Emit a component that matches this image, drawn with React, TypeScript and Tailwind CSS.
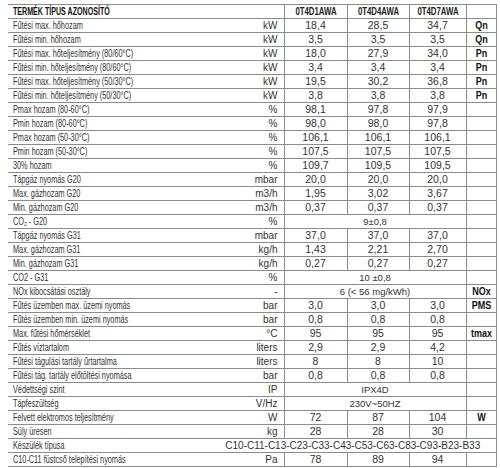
type Row = {
  label: string;
  unit?: string;
  values?: string[];
  span?: string;
  full?: string;
  sym?: string;
};

const rows: Row[] = [
  { label: "Fűtési max. hőhozam", unit: "kW", values: ["18,4", "28,5", "34,7"], sym: "Qn" },
  { label: "Fűtési min. hőhozam", unit: "kW", values: ["3,5", "3,5", "3,5"], sym: "Qn" },
  { label: "Fűtési max. hőteljesítmény (80/60°C)", unit: "kW", values: ["18,0", "27,9", "34,0"], sym: "Pn" },
  { label: "Fűtési min. hőteljesítmény (80/60°C)", unit: "kW", values: ["3,4", "3,4", "3,4"], sym: "Pn" },
  { label: "Fűtési max. hőteljesítmény (50/30°C)", unit: "kW", values: ["19,5", "30,2", "36,8"], sym: "Pn" },
  { label: "Fűtési min. hőteljesítmény (50/30°C)", unit: "kW", values: ["3,8", "3,8", "3,8"], sym: "Pn" },
  { label: "Pmax hozam (80-60°C)", unit: "%", values: ["98,1", "97,8", "97,9"] },
  { label: "Pmin hozam (80-60°C)", unit: "%", values: ["98,0", "98,0", "97,8"] },
  { label: "Pmax hozam (50-30°C)", unit: "%", values: ["106,1", "106,1", "106,1"] },
  { label: "Pmin hozam (50-30°C)", unit: "%", values: ["107,5", "107,5", "107,5"] },
  { label: "30% hozam", unit: "%", values: ["109,7", "109,5", "109,5"] },
  { label: "Tápgáz nyomás G20", unit: "mbar", values: ["20,0", "20,0", "20,0"] },
  { label: "Max. gázhozam G20", unit: "m3/h", values: ["1,95", "3,02", "3,67"] },
  { label: "Min. gázhozam G20", unit: "m3/h", values: ["0,37", "0,37", "0,37"] },
  { label: "CO₂ - G20", unit: "%", span: "9±0,8" },
  { label: "Tápgáz nyomás G31", unit: "mbar", values: ["37,0", "37,0", "37,0"] },
  { label: "Max. gázhozam G31", unit: "kg/h", values: ["1,43", "2,21", "2,70"] },
  { label: "Min. gázhozam G31", unit: "kg/h", values: ["0,27", "0,27", "0,27"] },
  { label: "CO2 - G31", unit: "%", span: "10 ±0,8" },
  { label: "NOx kibocsátási osztály", unit: "-", span: "6 (< 56 mg/kWh)", sym: "NOx" },
  { label: "Fűtés üzemben max. üzemi nyomás", unit: "bar", values: ["3,0", "3,0", "3,0"], sym: "PMS" },
  { label: "Fűtés üzemben min. üzemi nyomás", unit: "bar", values: ["0,8", "0,8", "0,8"] },
  { label: "Max. fűtési hőmérséklet", unit: "°C", values: ["95", "95", "95"], sym: "tmax" },
  { label: "Fűtés víztartalom", unit: "liters", values: ["2,9", "2,9", "4,2"] },
  { label: "Fűtési tágulási tartály űrtartalma", unit: "liters", values: ["8", "8", "10"] },
  { label: "Fűtési tág. tartály előtöltési nyomása", unit: "bar", values: ["0,8", "0,8", "0,8"] },
  { label: "Védettségi szint", unit: "IP", span: "IPX4D" },
  { label: "Tápfeszültség", unit: "V/Hz", span: "230V~50HZ" },
  { label: "Felvett elektromos teljesítmény", unit: "W", values: ["72", "87", "104"], sym: "W" },
  { label: "Súly üresen", unit: "kg", values: ["28", "28", "30"] },
  { label: "Készülék típusa", full: "C10-C11-C13-C23-C33-C43-C53-C63-C83-C93-B23-B33" },
  { label: "C10-C11 füstcső telepítési nyomás", unit: "Pa", values: ["78", "89", "94"] },
];

const line = "border-[#8c8c8c]";
const sans = "font-['Liberation_Sans',Arial,sans-serif]";

export default function App() {
  return (
    <div className={`w-[500px] h-[468px] bg-white pt-[4px] pl-[8px] text-[#333] text-[10px] leading-none ${sans}`}>
      <table className={`table-fixed border-collapse w-[488px] border-t ${line}`}>
        <colgroup>
          <col className="w-[202px]" />
          <col className="w-[74px]" />
          <col className="w-[63px]" />
          <col className="w-[62px]" />
          <col className="w-[57px]" />
          <col className="w-[30px]" />
        </colgroup>
        <thead>
          <tr className={`h-[14px] border-b ${line}`}>
            <th className="p-0 pl-[5px] text-left whitespace-nowrap text-[10px] leading-none">
              <span className="block origin-left scale-x-[0.71] font-bold text-[#111]">TERMÉK TÍPUS AZONOSÍTÓ</span>
            </th>
            <th className="p-0" />
            {["0T4D1AWA", "0T4D4AWA", "0T4D7AWA"].map((h) => (
              <th key={h} className={`p-0 border-l ${line} text-center whitespace-nowrap text-[10px] leading-none`}>
                <span className="block scale-x-[0.78] font-bold text-[#222]">{h}</span>
              </th>
            ))}
            <th className={`p-0 border-x ${line}`} />
          </tr>
        </thead>
        <tbody>
          {rows.map((r) => (
            <tr key={r.label} className={`h-[14px] border-b ${line}`}>
              <td className="p-0 pl-[5px] whitespace-nowrap text-[10px] leading-none">
                <span className="block origin-left scale-x-[0.73]">{r.label}</span>
              </td>
              {r.full ? (
                <td colSpan={5} className={`p-0 border-r ${line} text-center text-[10px] leading-none whitespace-nowrap`}>
                  {r.full}
                </td>
              ) : (
                <>
                  <td className="p-0 pr-[6px] text-right text-[10px] leading-none">{r.unit}</td>
                  {r.span ? (
                    <td colSpan={3} className={`p-0 border-l ${line} text-center text-[9.5px] leading-none`}>
                      {r.span}
                    </td>
                  ) : (
                    r.values!.map((v, i) => (
                      <td key={i} className={`p-0 border-l ${line} text-center text-[10.5px] leading-none`}>
                        {v}
                      </td>
                    ))
                  )}
                  <td className={`p-0 border-x ${line} text-center whitespace-nowrap text-[10px] leading-none`}>
                    <span className="block scale-x-[0.9] font-bold text-[#111]">{r.sym}</span>
                  </td>
                </>
              )}
            </tr>
          ))}
        </tbody>
      </table>
    </div>
  );
}
